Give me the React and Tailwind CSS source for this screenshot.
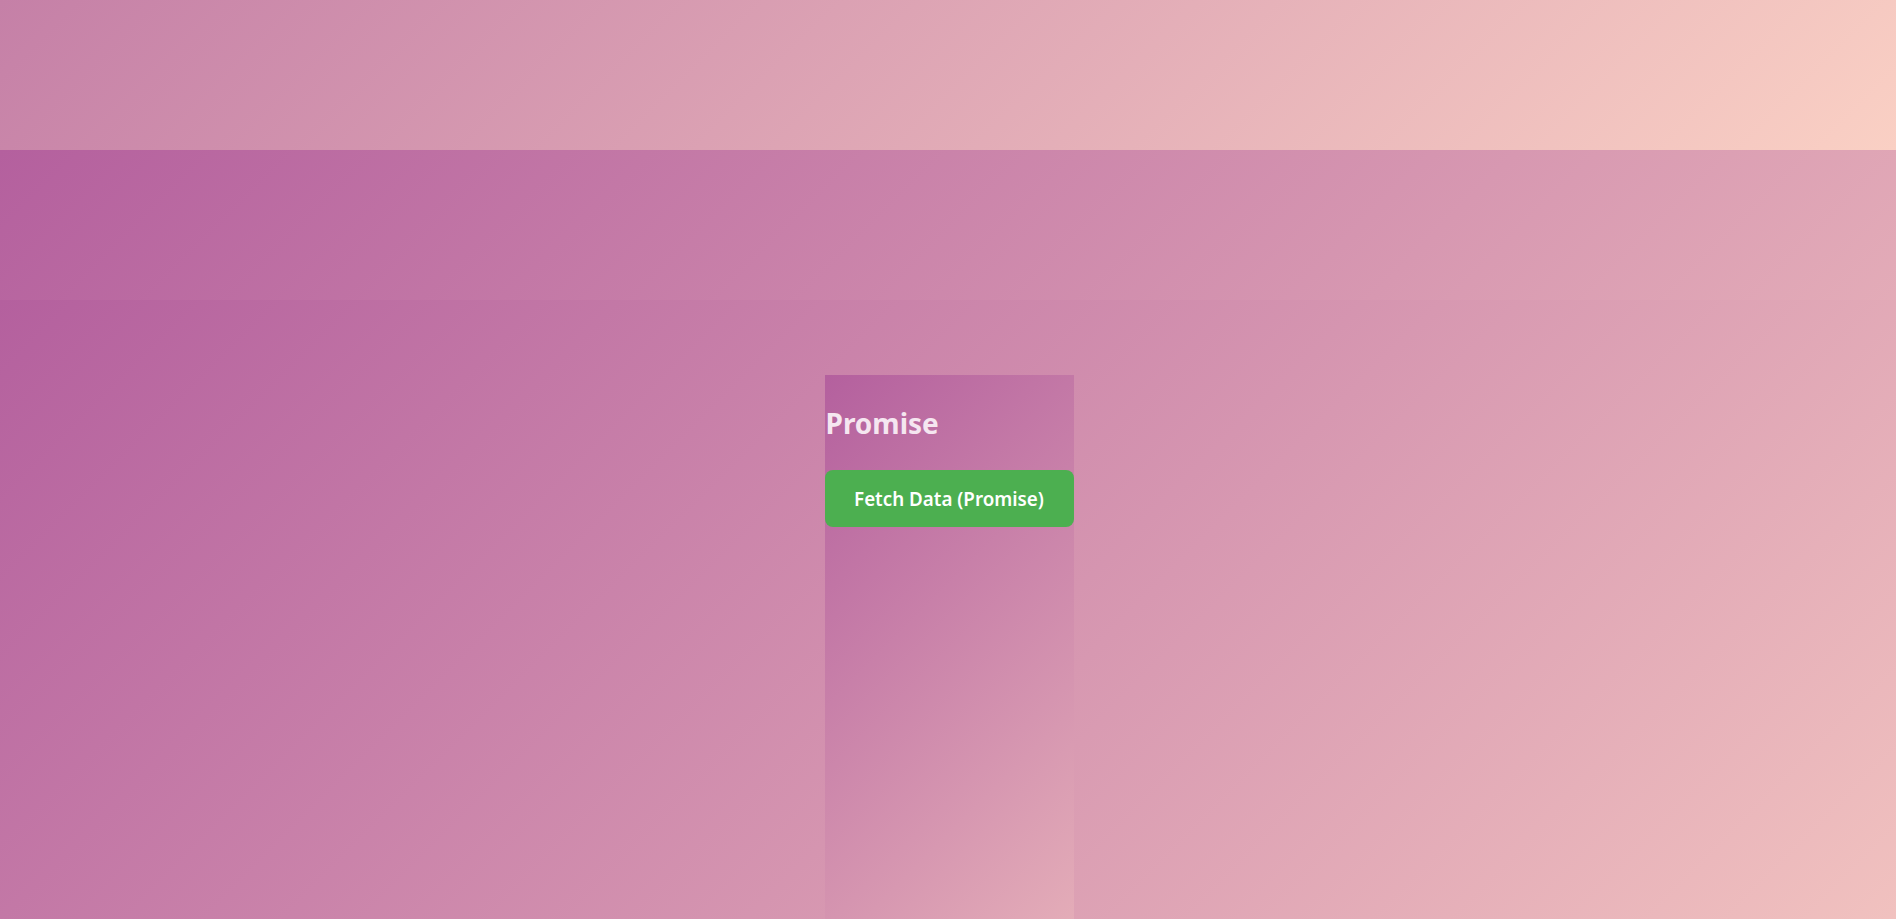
export default function App() {
  return (
    <div className="w-full overflow-hidden" style={{ fontFamily: '"Noto Sans", "Open Sans", Arial, sans-serif' }}>
      <div className="h-[150px] w-full bg-[linear-gradient(135deg,#c580a7,#fad0c4)]" />
      <div className="min-h-[919px] w-full bg-[linear-gradient(135deg,#b4609e,#fad0c4)] pt-[150px]">
        <div className="min-h-[919px] w-full bg-[linear-gradient(135deg,#b4609e,#fad0c4)] pt-[75px] pl-[2px] flex justify-center items-start">
          <div className="w-[249px] min-h-[919px] bg-[linear-gradient(135deg,#b4609e,#fad0c4)] flex flex-col">
            <h2 className="text-[28px] font-bold leading-[36px] mt-[30px] ml-[1px] mb-[29px] text-[#f5e6f0]">Promise</h2>
            <button className="h-[57px] w-full rounded-lg bg-[#4caf50] pt-[2px] text-white text-[18.8px] font-semibold">
              Fetch Data (Promise)
            </button>
          </div>
        </div>
      </div>
    </div>
  );
}
